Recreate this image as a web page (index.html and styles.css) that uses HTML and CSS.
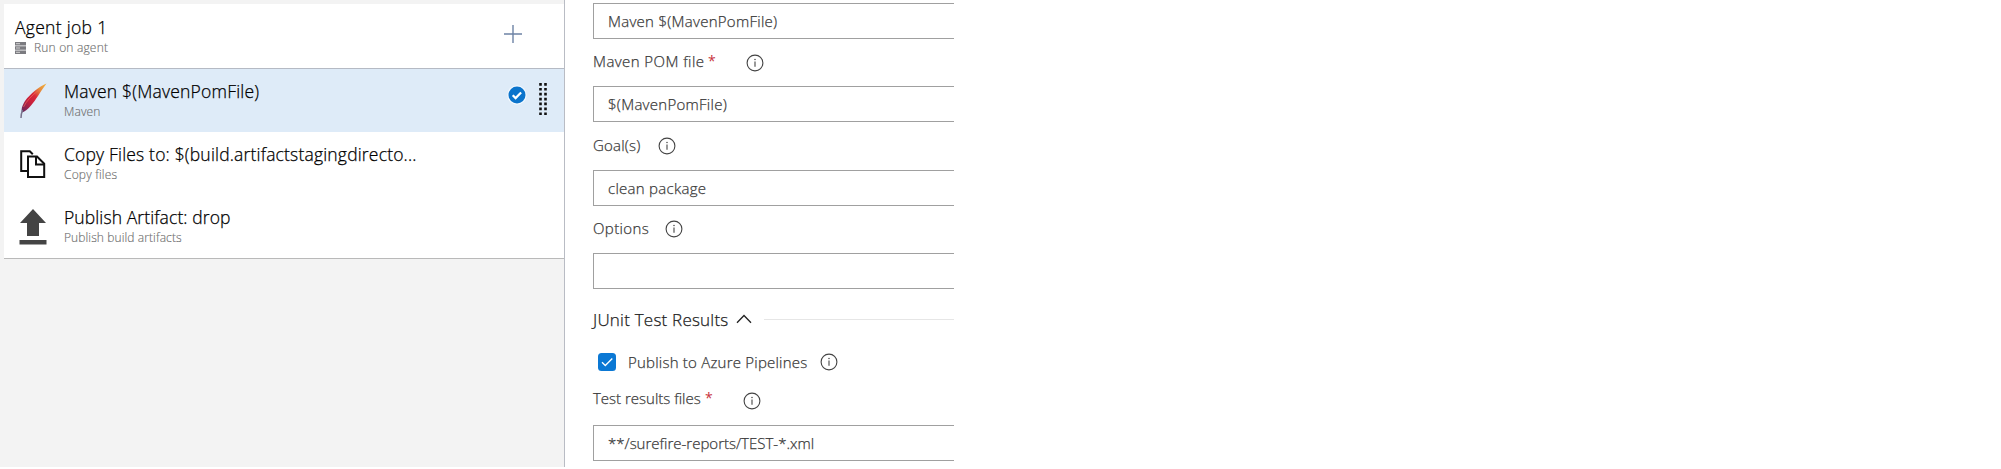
FILE: index.html
```
<!DOCTYPE html>
<html lang="en">
<head>
<meta charset="utf-8">
<title>Build pipeline tasks</title>
<link rel="stylesheet" href="styles.css">
</head>
<body>
<svg class="defs" width="0" height="0">
  <symbol id="info" viewBox="0 0 18 18"><circle cx="9" cy="9" r="7.900" fill="none" stroke="#444" stroke-width="1.100"/><path d="M9 7.600v5.200" stroke="#444" stroke-width="1.100"/><circle cx="9" cy="5.500" r=".75" fill="#444"/></symbol>
</svg>
<div class="editor">
  <aside class="tasks">
    <div class="job">
      <div class="job-text">
        <div class="title t-job"><span>Agent job 1</span></div>
        <div class="sub t-run">
          <svg class="server" width="11" height="12" viewBox="0 0 11 12"><path d="M0 0h11v3.400H0zM0 4.300h11v3.400H0zM0 8.600h11V12H0z" fill="#7b7b80"/><path d="M1 1.700h4M1 6h4M1 10.300h4" stroke="#dcdcdc" stroke-width=".9"/></svg>
          <span>Run on agent</span>
        </div>
      </div>
      <svg class="plus" width="18" height="18" viewBox="0 0 18 18"><path d="M9 0v18M0 9h18" stroke="#6d83a5" stroke-width="1.400"/></svg>
    </div>
    <div class="task selected">
      <svg class="icon" width="28" height="36" viewBox="0 0 28 36">
        <defs><linearGradient id="quill" x1="1" y1="0" x2="0" y2="1"><stop offset="0" stop-color="#f2b53c"/><stop offset=".25" stop-color="#e58a3c"/><stop offset=".45" stop-color="#d9283a"/><stop offset=".65" stop-color="#c81f3c"/><stop offset=".85" stop-color="#8a2452"/><stop offset="1" stop-color="#5b2c5e"/></linearGradient></defs>
        <path d="M27.500 .5C21 3 11 11 6 18 3 23 2 26 3 29.500 6 28.500 9 26 12 22.500 17 17 21 9 27.500 .5z" fill="url(#quill)"/>
        <path d="M3.500 27Q2 31 2 35" fill="none" stroke="#77728c" stroke-width="1.500"/>
        <path d="M20 7Q9 15 4.500 24" fill="none" stroke="#ef6a58" stroke-width=".7"/>
      </svg>
      <div class="task-text"><div class="title t-maven"><span>Maven $(MavenPomFile)</span></div><div class="sub s-maven"><span>Maven</span></div></div>
      <svg class="check" width="20" height="20" viewBox="0 0 20 20"><circle cx="10" cy="10" r="9.700" fill="#f3f9ff"/><circle cx="10" cy="10" r="8.500" fill="#0b74cc"/><path d="M5.700 10.200l2.900 2.900 5.500-5.700" fill="none" stroke="#fff" stroke-width="2.200"/></svg>
      <svg class="grip" width="8" height="33" viewBox="0 0 8 33"><path d="M1.500 0V33M6.500 0V33" stroke="#111" stroke-width="2.600" stroke-dasharray="2.700 2.200"/></svg>
    </div>
    <div class="task">
      <svg class="icon" width="28" height="36" viewBox="0 0 28 36"><path d="M9.500 25H2.200V5.200h8.600l3 3" fill="none" stroke="#111" stroke-width="2"/><path d="M9 10.500h9l7.200 7.200V31H9z" fill="#fff" stroke="#111" stroke-width="2"/><path d="M17 10.500v8h8" fill="none" stroke="#111" stroke-width="2"/></svg>
      <div class="task-text"><div class="title t-copy"><span>Copy Files to: $(build.artifactstagingdirecto...</span></div><div class="sub s-copy"><span>Copy files</span></div></div>
    </div>
    <div class="task">
      <svg class="icon" width="28" height="36" viewBox="0 0 28 36"><path d="M14 0l13 14h-7v13H8V14H1zM.500 31h27v4.500h-27z" fill="#444"/></svg>
      <div class="task-text"><div class="title t-pub"><span>Publish Artifact: drop</span></div><div class="sub s-pub"><span>Publish build artifacts</span></div></div>
    </div>
  </aside>
  <main class="form">
    <div class="input f-name"><span>Maven $(MavenPomFile)</span></div>
    <div class="label l-pom"><span>Maven POM file</span><b>*</b><svg class="info"><use href="#info"/></svg></div>
    <div class="input f-pom"><span>$(MavenPomFile)</span></div>
    <div class="label l-goal"><span>Goal(s)</span><svg class="info"><use href="#info"/></svg></div>
    <div class="input f-goal"><span>clean package</span></div>
    <div class="label l-opt"><span>Options</span><svg class="info"><use href="#info"/></svg></div>
    <div class="input"></div>
    <div class="section"><span>JUnit Test Results</span><svg class="chevron" width="16" height="10" viewBox="0 0 16 10"><path d="M1 8.800l7-7.300 7 7.300" fill="none" stroke="#222" stroke-width="1.300"/></svg><i class="rule"></i></div>
    <div class="publish"><svg class="box" width="18" height="18" viewBox="0 0 18 18"><rect width="18" height="18" rx="3.500" fill="#0b78d4"/><path d="M4 9.200l3.300 3.300 7-7" fill="none" stroke="#fff" stroke-width="1.300"/></svg><span>Publish to Azure Pipelines</span><svg class="info"><use href="#info"/></svg></div>
    <div class="label l-test"><span>Test results files</span><b>*</b><svg class="info"><use href="#info"/></svg></div>
    <div class="input f-test"><span>**/surefire-reports/TEST-*.xml</span></div>
  </main>
</div>
</body>
</html>
```
FILE: styles.css
```
* { box-sizing: border-box; }
body { margin: 0; background: #fff; font-family: "Open Sans", "Noto Sans", sans-serif; font-weight: 300; -webkit-text-stroke: 0.25px currentColor; }
.defs { position: absolute; }
svg { display: block; flex: none; }
.editor { display: flex; height: 467px; overflow: hidden; }
.tasks { width: 565px; flex: none; padding: 4px 0 0 4px; background: #f3f3f3; border-right: 1px solid #b9bcc4; }
.job { display: flex; height: 65px; background: #fff; border-bottom: 1px solid #b5bac4; padding: 11px 42px 0 11px; justify-content: space-between; }
.plus { margin-top: 10px; }
.title { font-size: 17.5px; line-height: 24px; padding-bottom: 1px; color: #000; white-space: nowrap; }
.t-job { letter-spacing: 0.3px; }
.t-maven { letter-spacing: 0.2px; }
.t-copy { letter-spacing: 0.18px; }
.t-pub { letter-spacing: 0.1px; }
.sub { display: flex; font-size: 12px; line-height: 16px; color: #707070; white-space: nowrap; letter-spacing: 0.1px; -webkit-text-stroke-width: 0.15px; }
.t-run, .s-copy { letter-spacing: 0.18px; }
.server { margin: 2px 8px 0 0; }
.task { display: flex; height: 63px; background: #fff; padding-left: 15px; }
.task:last-child { height: 64px; border-bottom: 1px solid #b9b9b9; }
.task.selected { background: #deebf8; }
.icon { margin-top: 14px; }
.task-text { padding: 10px 0 0 17px; flex: 1; }
.check { margin-top: 16px; }
.grip { margin: 14px 17px 0 12px; }
.form { width: 389px; flex: none; padding: 3px 0 0 28px; font-size: 15px; line-height: 24px; color: #3a3a3a; white-space: nowrap; }
.input { height: 36px; border: 1px solid #a0a0a0; border-right: 0; padding-left: 14px; line-height: 34px; letter-spacing: 0.27px; }
.f-test { letter-spacing: 0; }
.label { display: flex; height: 48px; padding-top: 10px; }
.label b { width: 38px; font-weight: 400; font-size: 14px; color: #c8343c; -webkit-text-stroke-width: 0; }
.info { width: 18px; height: 18px; margin-top: 4.5px; }
.l-pom { height: 47px; letter-spacing: 0.43px; }
.l-pom span { width: 115px; }
.l-goal { padding-top: 11px; letter-spacing: 0.2px; }
.l-goal span { width: 65px; }
.l-goal .info { margin-top: 3.5px; }
.l-opt { height: 47px; letter-spacing: 0.37px; }
.l-opt span { width: 72px; }
.l-opt .info { margin-top: 3.5px; }
.section { display: flex; font-size: 17px; height: 58px; padding-top: 19px; color: #222; letter-spacing: 0.22px; }
.section span { width: 143px; }
.chevron { margin-top: 6px; }
.rule { flex: 1; height: 1px; margin: 11px 0 0 12px; background: #e6e6e6; }
.publish { display: flex; height: 38px; padding: 3px 0 0 5px; letter-spacing: 0.22px; }
.publish .box { margin: 3px 12px 0 0; }
.publish span { width: 191.5px; }
.publish .info { margin-top: 2.5px; }
.l-test { height: 40px; padding-top: 1px; }
.l-test span { width: 112px; }
.l-test .info { margin-top: 5.5px; }
```
